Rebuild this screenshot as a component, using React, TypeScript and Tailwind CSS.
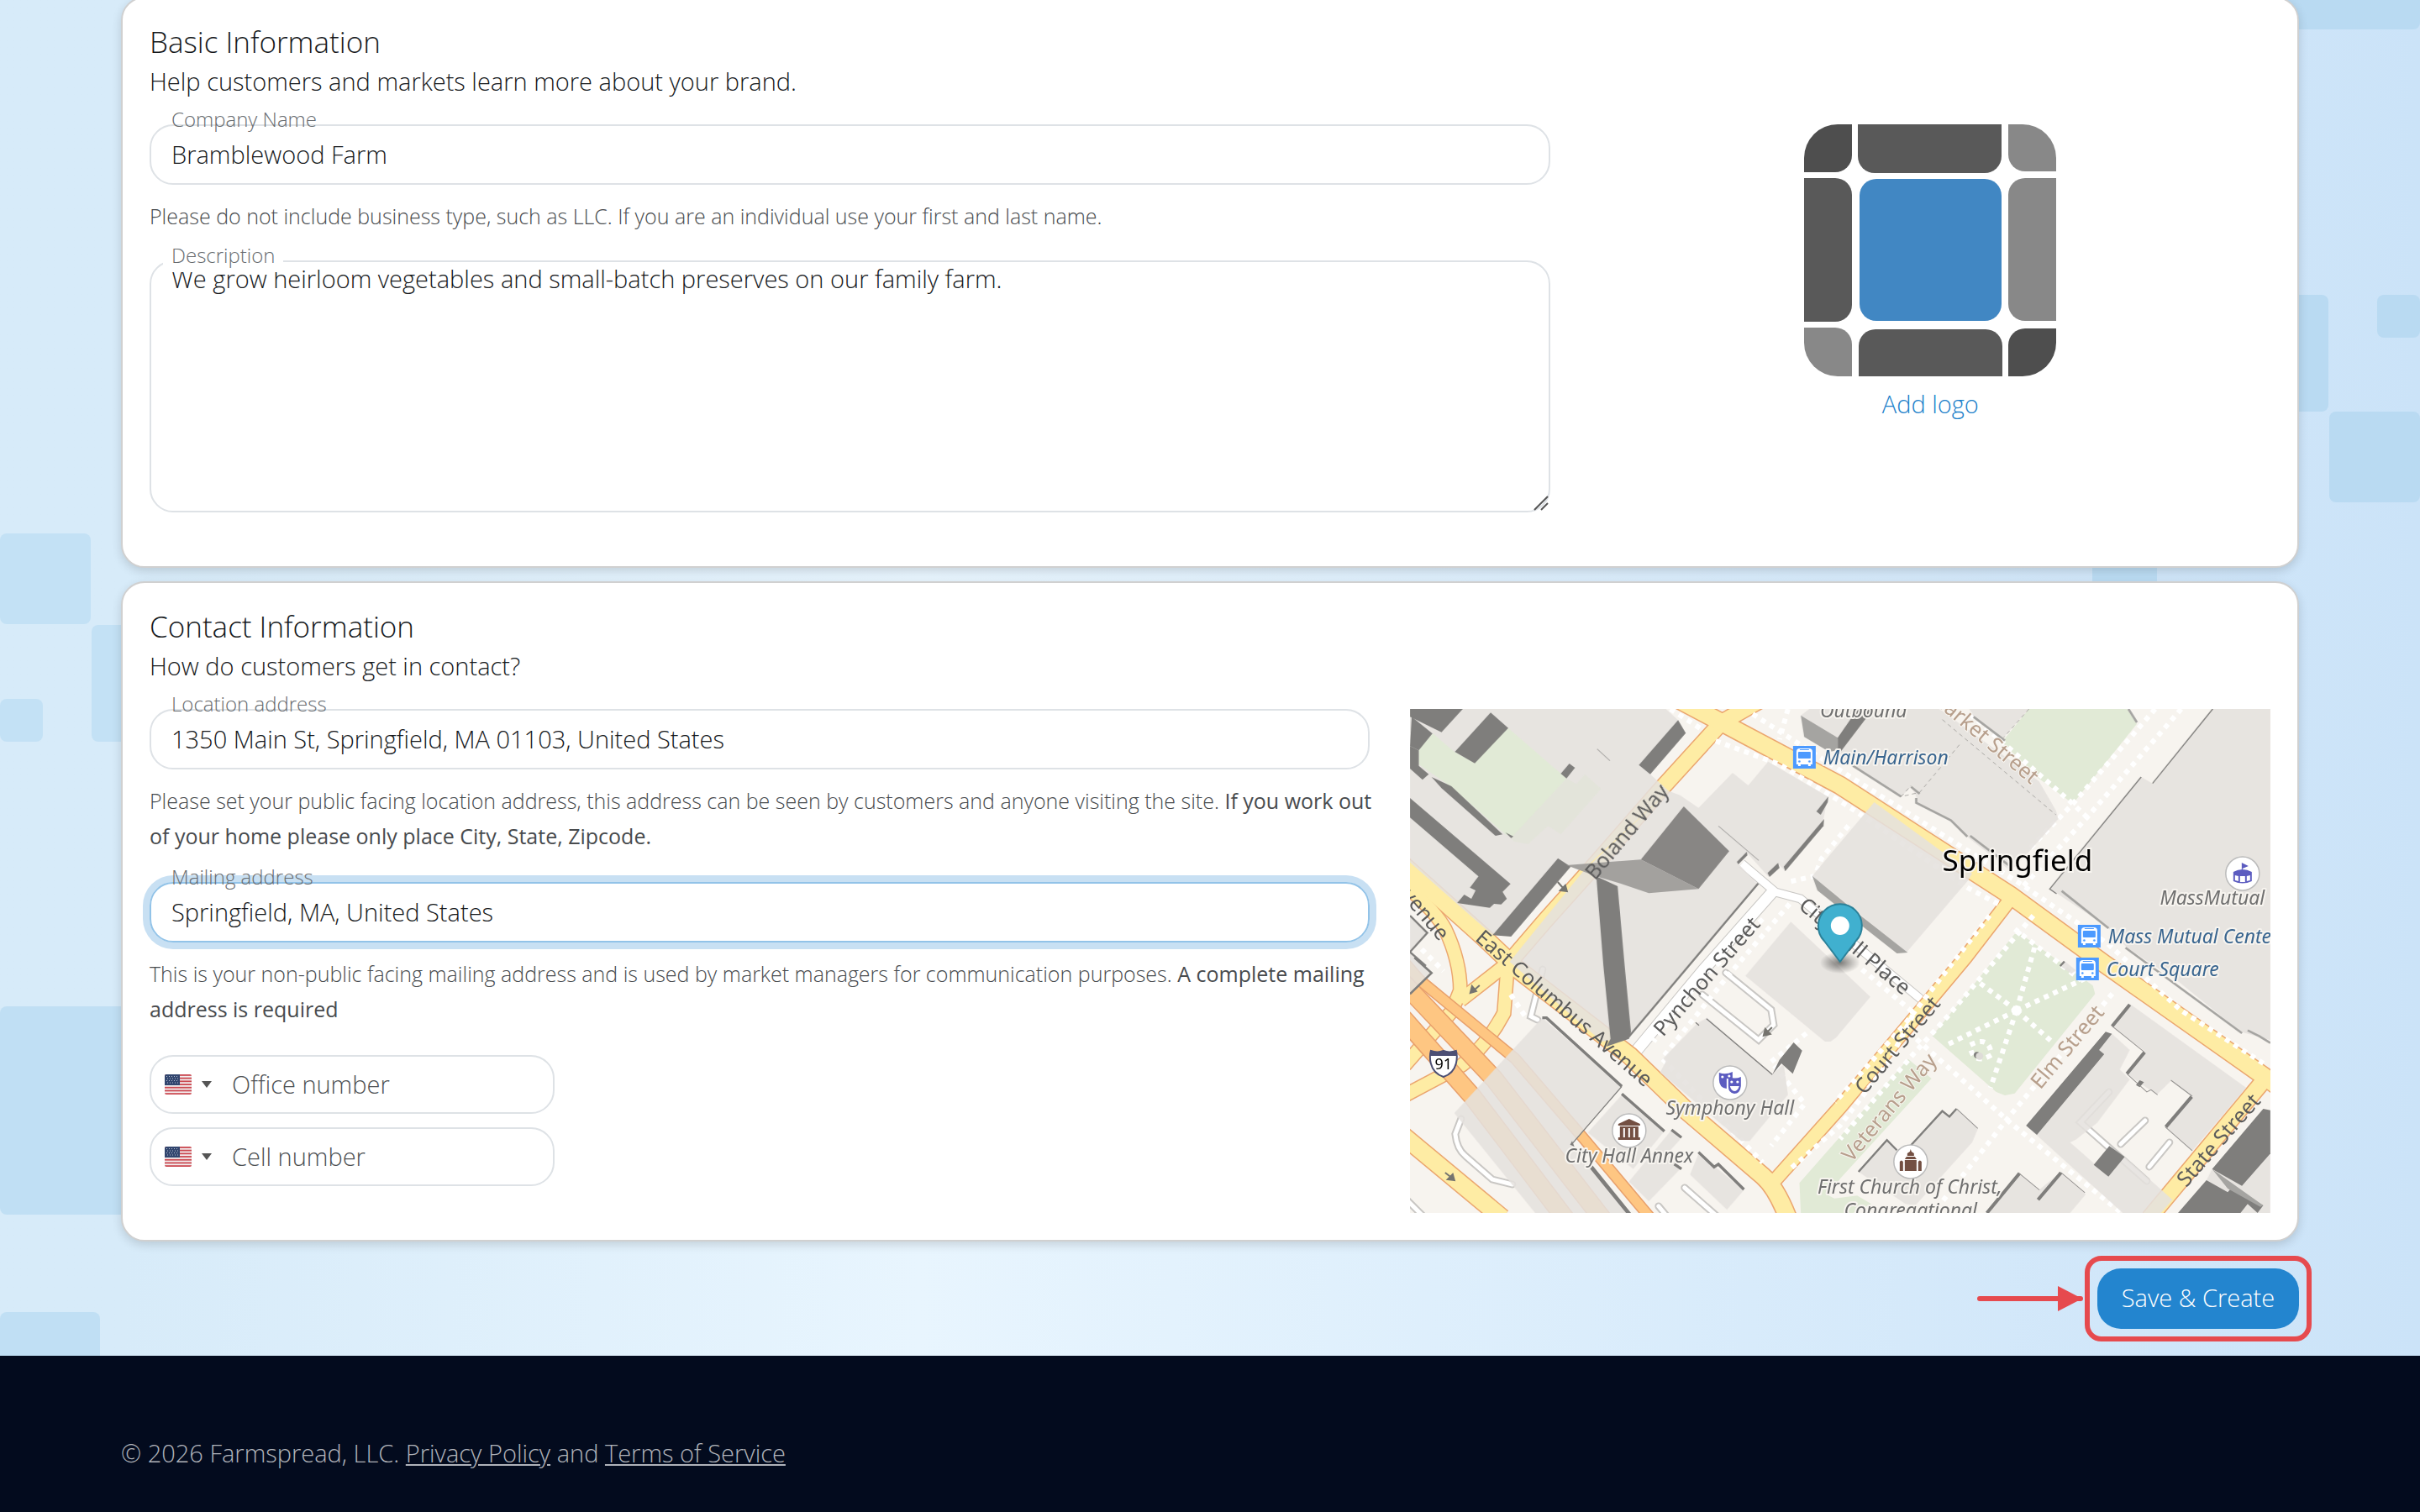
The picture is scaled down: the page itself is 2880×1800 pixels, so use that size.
import React from 'react';

const NUMBER_TYPES = [
  { id: 'office', label: 'Office number' },
  { id: 'cell', label: 'Cell number' },
];

const LABEL =
  'pointer-events-none absolute left-[26px] -top-[22px] text-[24px] leading-8 text-[#686c70]';
const FIELD =
  'block h-[72px] w-full rounded-[28px] border-2 bg-transparent px-6 pb-[2px] text-[29px] text-[#16191c] outline-none';

function Field({
  id,
  label,
  value,
  active,
}: {
  id: string;
  label: string;
  value: string;
  active?: boolean;
}) {
  return (
    <div className="relative">
      <input
        id={id}
        type="text"
        defaultValue={value}
        className={`${FIELD} ${
          active
            ? 'border-[#92c3e8] ring-8 ring-[#c8e0f3]'
            : 'border-[#dee2e6]'
        }`}
      />
      <label htmlFor={id} className={LABEL}>
        {label}
      </label>
    </div>
  );
}

function Hint({ children }: { children: React.ReactNode }) {
  return (
    <p className="mt-4 -mr-2 pb-[2px] text-[25px] leading-[42px] text-[#484b4e]">
      {children}
    </p>
  );
}

function Card({
  title,
  subtitle,
  children,
}: {
  title: string;
  subtitle: string;
  children: React.ReactNode;
}) {
  return (
    <section className="rounded-[28px] border-2 border-[#d0d0d0] bg-white p-8 shadow-[0_4px_12px_rgba(0,0,0,0.14)]">
      <h2 className="text-[35px] leading-10 text-[#16191c]">{title}</h2>
      <p className="mt-[6px] mb-[30px] text-[29px] leading-[42px] text-[#16191c]">
        {subtitle}
      </p>
      {children}
    </section>
  );
}

function Logo() {
  return (
    <svg viewBox="0 0 300 300" className="size-[300px]" aria-hidden="true">
      <path d="M0 57V40A40 40 0 0 1 40 0H57V37A20 20 0 0 1 37 57Z" fill="#4e4e4e" />
      <path d="M64 0H235V38A20 20 0 0 1 215 58H84A20 20 0 0 1 64 38Z" fill="#595959" />
      <path d="M243 0H260A40 40 0 0 1 300 40V56H263A20 20 0 0 1 243 36Z" fill="#888" />
      <path d="M0 64H37A20 20 0 0 1 57 84V215A20 20 0 0 1 37 235H0Z" fill="#595959" />
      <rect x="66" y="65" width="169" height="169" rx="20" fill="#4187c3" />
      <path d="M300 64H263A20 20 0 0 0 243 84V214A20 20 0 0 0 263 234H300Z" fill="#888" />
      <path d="M0 242H37A20 20 0 0 1 57 262V300H40A40 40 0 0 1 0 260Z" fill="#888" />
      <path d="M65 300V264A20 20 0 0 1 85 244H216A20 20 0 0 1 236 264V300Z" fill="#595959" />
      <path d="M300 243H263A20 20 0 0 0 243 263V300H260A40 40 0 0 0 300 260Z" fill="#4e4e4e" />
    </svg>
  );
}

function Flag() {
  return (
    <svg viewBox="0 0 32 24" className="h-6 w-8" aria-hidden="true">
      <clipPath id="flag">
        <rect width="32" height="24" rx="2" />
      </clipPath>
      <g clipPath="url(#flag)">
        <rect width="32" height="24" fill="#f3eff0" />
        {[0, 1, 2, 3, 4, 5, 6].map((i) => (
          <rect key={i} y={i * 3.7} width="32" height="1.85" fill="#cb4a52" />
        ))}
        <rect width="18" height="13" fill="#32466f" />
        <path
          d="M2 2.5H17M3 5H17M2 7.5H17M3 10H17"
          stroke="#b4bdd0"
          strokeDasharray="1 2"
        />
      </g>
    </svg>
  );
}

function PhoneField({ id, label }: { id: string; label: string }) {
  return (
    <div className="flex h-[70px] w-[482px] max-w-full items-center rounded-[28px] border-2 border-[#dee2e6] pl-4">
      <div className="relative flex h-full items-center gap-3 pr-6">
        <Flag />
        <svg viewBox="0 0 12 8" className="h-2 w-3" aria-hidden="true">
          <path d="M0 0H12L6 8Z" fill="#555" />
        </svg>
        <select
          aria-label={`${label} country`}
          className="absolute inset-0 opacity-0"
        >
          <option>+1</option>
        </select>
      </div>
      <input
        id={id}
        type="tel"
        aria-label={label}
        placeholder={label}
        className="h-full min-w-0 flex-1 bg-transparent pb-[2px] text-[29px] outline-none placeholder:text-[#4e5154]"
      />
    </div>
  );
}

const ROADS = {
  main: 'M318 -12L371 16L512 91L715 222L826 303L1019 439L1034 450',
  mainNorth: 'M371 16L420 -12',
  boland: 'M371 16L301 93L212 195L161 252L118 302',
  columbus: 'M-10 184L87 271L127 309L262 413L330 479L420 556Q436 570 450 606',
  court: 'M715 226L661 296L512 474L430 566',
  state: 'M1019 439L880 606',
  rampA: 'M-8 208Q30 240 42 262Q60 300 60 335L50 360L-6 424',
  rampB: 'M120 300L60 347',
  rampC: 'M116 310L112 362Q92 400 62 424L-6 460',
  west: 'M-8 508L110 606',
};

const I91 = [
  { d: 'M-8 300L12 323L125 416L204 508L288 608', w: 11 },
  { d: 'M-8 326L100 440L230 608', w: 20 },
  { d: 'M-8 368L75 462L186 608', w: 20 },
];

const WHITE_ROADS = [
  { d: 'M435 214L350 310L262 416', w: 13 },
  { d: 'M395 184L435 218L465 226L512 266L616 352', w: 9 },
];

const SERVICE = [
  'M376 314L430 358L433 376L415 394L348 340',
  'M832 456L798 492L877 562',
  'M875 490L846 518',
  'M904 516L880 545',
  'M61 488L54 506Q56 524 66 532L98 560L122 566',
  'M327 570L368 606M296 592L306 604',
  'M-4 584L16 604',
  'M158 310L144 366L152 370',
];

const FOOTPATHS = [
  'M408 6L512 73L728 209L830 279L918 359L1019 424',
  'M364 38L440 66L522 116L664 213L700 232',
  'M522 139L490 178L482 199L450 206',
  'M887 0L789 113L735 169',
  'M918 0L806 129L728 213',
  'M667 6L789 113L806 129',
  'M310 0L350 26M450 0L440 36',
  'M722 359L740 296L745 279',
  'M722 359L799 323L720 262',
  'M722 359L764 396',
  'M722 359L637 401',
  'M722 359L691 451',
  'M722 359L678 326',
  'M667 400Q690 388 692 412Q672 424 667 404',
  'M836 339L715 483L634 586',
  'M603 393L715 493L847 600',
  'M690 246L590 374L506 468',
  'M742 246L640 366L600 410L512 512',
  'M420 250L340 330L290 396',
  'M452 232L380 316L300 416L420 540',
  'M538 310L600 362L570 420L512 496L450 550',
  'M472 386L430 420L470 470L430 520',
  'M14 286L40 312M120 340L140 370',
];

const poly = (points: string[], fill: string) =>
  points.map((p) => <polygon key={p} points={p} fill={fill} />);
const lines = (points: string[], stroke: string, width: number) =>
  points.map((p) => (
    <polyline key={p} points={p} fill="none" stroke={stroke} strokeWidth={width} />
  ));

const NW = 'translate(-8 -4) scale(.338 .3333)';
const NE = 'translate(512 -4) scale(.338 .3333)';
const SW = 'translate(-8 296) scale(.338 .3333)';
const SE = 'translate(512 296) scale(.338 .3333)';

const STREETS = [
  { t: 'Boland Way', x: 258, y: 146, r: -50 },
  { t: 'East Columbus Avenue', x: 184, y: 356, r: 41 },
  { t: 'Avenue', x: 14, y: 238, r: 50 },
  { t: 'Pynchon Street', x: 353, y: 318, r: -49 },
  { t: 'City Hall Place', x: 530, y: 282, r: 40 },
  { t: 'Court Street', x: 580, y: 400, r: -50 },
  { t: 'State Street', x: 962, y: 513, r: -49 },
  { t: 'Veterans Way', x: 570, y: 474, r: -50, tan: true },
  { t: 'Elm Street', x: 782, y: 402, r: -50, tan: true },
  { t: 'Market Street', x: 684, y: 32, r: 40, tan: true },
];

const PLACES = [
  { t: 'Outbound', x: 540, y: 10 },
  { t: 'MassMutual', x: 955, y: 233 },
  { t: 'Symphony Hall', x: 381, y: 483 },
  { t: 'City Hall Annex', x: 261, y: 540 },
  { t: 'First Church of Christ,', x: 595, y: 577 },
  { t: 'Congregational', x: 596, y: 605 },
];

const STOPS = [
  { t: 'Main/Harrison', x: 456, y: 44 },
  { t: 'Mass Mutual Center', x: 795, y: 257 },
  { t: 'Court Square', x: 793, y: 296 },
];

function Bus({ x, y }: { x: number; y: number }) {
  return (
    <g transform={`translate(${x} ${y})`}>
      <rect width="27" height="27" fill="#4c9aff" />
      <path
        d="M4 22V7Q4 3 8 3H19Q23 3 23 7V22H21V24H18V22H9V24H6V22Z"
        fill="#fff"
      />
      <rect x="6" y="7" width="15" height="8" rx="1" fill="#4c9aff" />
      <rect x="8" y="4" width="11" height="1" fill="#4c9aff" />
      <circle cx="7.500" cy="18.500" r="1.300" fill="#4c9aff" />
      <circle cx="19.500" cy="18.500" r="1.300" fill="#4c9aff" />
    </g>
  );
}

function Poi({
  x,
  y,
  children,
}: {
  x: number;
  y: number;
  children: React.ReactNode;
}) {
  return (
    <g transform={`translate(${x} ${y})`}>
      <circle r="20" fill="#fff" stroke="#bbb" strokeWidth="1.5" />
      {children}
    </g>
  );
}

function LocationMap() {
  return (
    <svg
      viewBox="0 0 1024 600"
      preserveAspectRatio="xMidYMid slice"
      className="h-[600px] w-full bg-[#f7f4ef] font-['Noto_Sans',sans-serif] font-normal"
      role="img"
      aria-label="Map of downtown Springfield"
    >
      <defs>
        <radialGradient id="pinShadow">
          <stop offset="0" stopColor="#000" stopOpacity=".5" />
          <stop offset="1" stopColor="#000" stopOpacity="0" />
        </radialGradient>
      </defs>

      <g transform={NE}>
        {poly(['665,12 1010,12 1045,65 820,350 700,260 570,130'], '#e1ead6')}
      </g>
      <g transform={SE}>
        {poly(
          [
            '325,280 615,-85 640,-82 890,100 898,130 615,485 580,492 550,480',
            '240,362 322,432 0,790 -40,850 -20,860 60,850 110,880 40,915 -138,915 -143,805 0,640',
          ],
          '#e1ead6',
        )}
      </g>

      <g fill="none" stroke="#c9c7c4">
        {WHITE_ROADS.map(({ d, w }) => (
          <path key={d} d={d} strokeWidth={w + 2} />
        ))}
        {SERVICE.map((d) => (
          <path key={d} d={d} strokeWidth="9" strokeLinecap="round" />
        ))}
      </g>
      <g fill="none" stroke="#fff">
        {WHITE_ROADS.map(({ d, w }) => (
          <path key={d} d={d} strokeWidth={w} />
        ))}
        {SERVICE.map((d) => (
          <path key={d} d={d} strokeWidth="5" strokeLinecap="round" />
        ))}
      </g>

      <g fill="none" stroke="#eba66f" strokeWidth="18">
        <path d={ROADS.rampA} />
        <path d={ROADS.rampB} />
        <path d={ROADS.rampC} />
        <path d={ROADS.court} />
        <path d={ROADS.boland} strokeWidth="21" />
        <path d={ROADS.state} strokeWidth="21" />
        <path d={ROADS.west} strokeWidth="23" />
        <path d={ROADS.mainNorth} strokeWidth="21" />
        <path d={ROADS.columbus} strokeWidth="23" />
        <path d={ROADS.main} strokeWidth="23" />
      </g>
      <g fill="none" stroke="#feeca4" strokeWidth="15">
        <path d={ROADS.rampA} />
        <path d={ROADS.rampB} />
        <path d={ROADS.rampC} />
        <path d={ROADS.court} />
        <path d={ROADS.boland} strokeWidth="18" />
        <path d={ROADS.state} strokeWidth="18" />
        <path d={ROADS.west} strokeWidth="20" />
        <path d={ROADS.mainNorth} strokeWidth="18" />
        <path d={ROADS.columbus} strokeWidth="20" />
        <path d={ROADS.main} strokeWidth="20" />
      </g>
      {I91.map(({ d, w }) => (
        <g key={d} fill="none">
          <path d={d} stroke="#e8a06c" strokeWidth={w + 3} />
          <path d={d} stroke="#fec682" strokeWidth={w} />
        </g>
      ))}

      <g fill="none" stroke="#fff" strokeWidth="6" strokeDasharray="6 6">
        {FOOTPATHS.map((d) => (
          <path key={d} d={d} />
        ))}
      </g>

      {/* building footprints */}
      <g opacity=".87">
        <g transform={NW}>
          {poly(
            [
              '24,12 925,12 968,52 870,245 935,305 630,590 590,575 545,545 315,820 24,560',
              '935,305 975,320 1040,365 1160,240 1215,285 1285,200 1495,325 1480,405 1345,590 1320,565 1285,610 1210,525 1180,565 1250,640 1005,930 790,1185 700,1200 375,915 635,590',
              '1430,12 1600,12 1530,115 1400,35',
              '1365,772 1645,1040 1525,1185 1505,1200 1485,1200 1205,965',
              '24,750 85,812 24,880',
            ],
            '#e5e1de',
          )}
        </g>
        <g transform={NE}>
          {poly(
            [
              '-98,608 120,345 465,600 450,625 235,880 75,750',
              '120,12 350,12 700,270 760,375 768,405 640,550 600,590 450,470 395,415 268,345 268,325 250,290 215,325 45,215 0,180 0,105',
              '455,12 665,12 575,115 530,90 470,40',
              '1310,12 1515,12 1515,1195 1410,1165 1190,985 1010,865 940,790 740,655 1060,255 1100,278',
            ],
            '#e5e1de',
          )}
        </g>
        <g transform={SW}>
          {poly(
            [
              '180,555 490,215 770,460 595,665 810,925 475,925',
              '650,625 770,490 920,620 810,755',
              '945,615 975,650 930,700 980,750 865,870 795,800',
              '1040,700 1200,830 1140,900 1010,775',
              '905,410 925,370 915,360 1035,235 1070,215 1300,415 1340,380 1355,490 1220,655 1190,655',
              '24,-20 100,55 24,130',
            ],
            '#e5e1de',
          )}
        </g>
        <g transform={SE}>
          {poly(
            [
              '165,650 205,690 255,665 360,548 385,568 410,540 485,612 465,660 265,885 230,880 65,765',
              '1020,165 1430,465 1240,690 1145,605 1240,495 1165,440 1115,490 1045,440 1010,415 1075,335 955,245',
              '955,270 1020,330 985,400 1020,435 905,590 830,650 810,660 900,740 1000,710 1170,865 1130,912 995,912 655,600',
              '630,770 700,830 775,768 865,845 810,912 515,912',
              '1515,600 1515,912 1190,912 1290,795 1310,755',
              '775,30 790,12 830,45 815,58',
            ],
            '#e5e1de',
          )}
        </g>
      </g>

      {/* lawns and extruded walls */}
      <g transform={NW}>
        {poly(
          [
            '105,100 55,155 55,210 170,290 360,460 390,470 575,260 370,80 250,205 180,165',
          ],
          '#e1ead6',
        )}
        {poly(
          ['575,260 610,280 640,245 697,297 555,460 510,430 440,495 390,485 380,473'],
          '#e3e4da',
        )}
        {poly(
          [
            '24,12 210,12 135,95 24,40',
            '30,40 103,100 55,160 24,145',
            '308,25 370,80 252,206 182,165',
            '24,145 55,160 55,215 90,245 68,265 24,225',
            '100,255 170,288 350,460 325,465 135,295',
            '360,453 388,467 380,473',
            '585,207 605,222 575,260 555,243',
            '24,330 378,637 350,665 365,690 345,710 320,708 305,722 190,705 215,675 240,690 255,660 235,650 265,610 24,400',
            '545,545 590,575 380,825 315,820',
            '968,52 995,98 870,245 830,212',
            '1497,325 1495,345 1470,390 1455,378',
            '1482,405 1480,430 1345,592 1340,575',
            '1320,562 1325,580 1290,612 1283,598',
            '1210,522 1212,535 1180,567 1175,558',
            '1530,115 1600,12 1655,12 1540,165 1530,160',
          ],
          '#7f7e7c',
        )}
        {poly(['988,360 1148,520 1040,655 837,550'], '#888684')}
        {poly(['1400,35 1530,115 1530,160 1500,165 1412,112'], '#a5a4a1')}
        <polygon
          points="575,570 837,550 1040,655 865,670 755,632 680,610"
          fill="#9b9997"
          opacity=".9"
        />
        {poly(
          ['680,610 755,645 780,930 802,1165 795,1190 715,1218 730,1190 705,930'],
          '#7f7e7c',
        )}
        {lines(['1250,635 1005,930 790,1188', '24,750 85,812 24,880 80,930'], '#7f7e7c', 7)}
        {lines(['1110,430 1252,553', '683,155 728,197'], '#aaa8a6', 3)}
      </g>
      <g transform={NE}>
        {poly(['-98,608 0,690 75,752 238,882 200,885 75,785 0,725 -80,660'], '#a5a4a1')}
        {lines(['1312,12 1100,278', '1060,255 738,655 762,672'], '#7f7e7c', 4)}
        {lines(
          [
            '780,662 945,795',
            '1005,865 1415,1170',
            '1435,1160 1475,1180 1515,1205',
            '45,215 215,325',
            '250,290 280,315',
            '268,330 268,347 390,410 448,468',
            '458,465 600,575',
            '470,40 580,125',
            '1015,12 1045,60',
          ],
          '#a5a4a1',
          8,
        )}
        <path
          d="M360 50L760 390M665 12L575 115M420 140L280 310L215 325L250 285"
          stroke="#8a8886"
          strokeWidth="2"
          strokeDasharray="14 12"
          fill="none"
        />
      </g>
      <g transform={SW}>
        {poly(
          ['1375,303 1405,332 1372,415 1332,378 1300,418 1325,365', '595,655 603,675 588,668'],
          '#7f7e7c',
        )}
        {lines(
          [
            '490,215 505,215 770,460',
            '770,487 920,620',
            '945,615 980,643',
            '955,738 980,755',
            '1040,695 1095,748 1110,738 1200,828',
          ],
          '#7f7e7c',
          10,
        )}
        {lines(['660,745 800,920'], '#7f7e7c', 14)}
        {lines(['770,460 595,665', '1068,218 1300,418', '1030,232 1042,242'], '#7f7e7c', 4)}
        {lines(['40,0 100,55 24,130'], '#7f7e7c', 8)}
      </g>
      <g transform={SE}>
        {poly(
          [
            '935,265 957,272 912,330 930,345 693,633 655,600',
            '948,673 1002,712 945,782 893,740',
            '1490,540 1515,545 1515,700 1415,815 1310,755',
            '1290,795 1365,838 1380,820 1490,885 1470,912 1435,880 1410,912 1190,912',
            '1055,438 1070,445 1055,463 1042,455',
          ],
          '#7f7e7c',
        )}
        {poly(['1310,755 1490,885 1480,890 1365,825'], '#a5a4a1')}
        {lines(
          [
            '1020,168 958,245',
            '1072,338 1010,415',
            '1238,497 1147,605',
            '517,912 632,770',
            '697,865 778,768',
          ],
          '#7f7e7c',
          12,
        )}
        {lines(
          [
            '65,765 165,652 200,688',
            '250,670 360,548 385,568 410,540',
            '790,14 775,30',
          ],
          '#7f7e7c',
          7,
        )}
        {lines(
          [
            '958,245 1072,338',
            '1010,415 1080,480 1095,472 1118,490',
            '1165,438 1240,495',
            '1145,605 1240,690',
            '410,540 485,610',
            '630,770 702,830',
            '778,768 862,840',
          ],
          '#969492',
          3,
        )}
        <circle cx="482" cy="348" r="11" fill="#7f7e7c" />
        <circle cx="491" cy="352" r="13" fill="#dedcd8" />
      </g>

      {/* one-way arrows */}
      <g stroke="#75746f" strokeWidth="2" fill="#75746f">
        <path d="M83 329L74 337M72 338L74 330L79 336Z" />
        <path d="M42 552L51 559M53 561L45 560L51 554Z" />
        <path d="M176 206L184 215M187 217L179 216L185 210Z" />
        <path d="M431 379L424 386M421 389L423 381L429 387Z" />
      </g>

      <g fontSize="25" textAnchor="middle" stroke="#f7f4ef" strokeWidth="2" paintOrder="stroke">
        {STREETS.map(({ t, x, y, r, tan }) => (
          <text
            key={t}
            transform={`translate(${x} ${y}) rotate(${r})`}
            dy="9"
            fill={tan ? '#b79f8c' : '#5b5b5b'}
            strokeOpacity={tan ? 1 : 0}
          >
            {t}
          </text>
        ))}
      </g>

      {STOPS.map(({ t, x, y }) => (
        <Bus key={t} x={x} y={y} />
      ))}
      <g fontSize="23" fontStyle="italic" stroke="#f7f4ef" strokeWidth="4" paintOrder="stroke" strokeLinejoin="round">
        {STOPS.map(({ t, x, y }) => (
          <text key={t} x={x + 36} y={y + 22} fill="#39658f">
            {t}
          </text>
        ))}
        {PLACES.map(({ t, x, y }) => (
          <text key={t} x={x} y={y} fill="#6f6f6f" textAnchor="middle">
            {t}
          </text>
        ))}
      </g>
      <text
        x="723"
        y="193"
        fontSize="35"
        textAnchor="middle"
        stroke="#f7f4ef"
        strokeWidth="4"
        paintOrder="stroke"
      >
        Springfield
      </text>

      <Poi x={991} y={196}>
        <g fill="#5c5cc0">
          <path d="M-1 -13L7 -9L0 -6V-4H-1Z" />
          <path d="M-11 -2Q0 -8 11 -2V9Q0 14 -11 9Z" />
          <path d="M-9 2L-5 3V9L-9 8ZM-3 3H3V10H-3ZM5 3L9 2V8L5 9Z" fill="#fff" />
        </g>
      </Poi>
      <Poi x={381} y={445}>
        <path d="M-13 -12Q-5 -9 3 -13V-5H-4V7Q-13 6 -13 -4Z" fill="#5c5cc0" />
        <path d="M-2 -7Q6 -4 13 -7V4Q12 13 5 13Q-2 12 -2 4Z" fill="#5c5cc0" />
        <g fill="#fff">
          <circle cx="-9" cy="-7" r="1.600" />
          <circle cx="-1" cy="-8" r="1.600" />
          <circle cx="2" cy="-1" r="1.600" />
          <circle cx="9" cy="-1" r="1.600" />
          <path d="M0 4H11Q9 10 5 10Q1 9 0 4Z" />
        </g>
      </Poi>
      <Poi x={261} y={502}>
        <g fill="#734f42">
          <path d="M0 -14L13 -8V-6H-13V-8Z" />
          <path d="M-11 -5H11V8H13V11H-13V8H-11Z" />
          <path d="M-7 -3H-5V8H-7ZM-1 -3H1V8H-1ZM5 -3H7V8H5Z" fill="#fff" />
        </g>
      </Poi>
      <Poi x={596} y={539}>
        <g fill="#734f42">
          <path d="M0 -15L1 -12L4 -10V-7H-4V-10L-1 -12Z" />
          <path d="M-5 -6H5L7 -3H-7Z" />
          <path d="M-7 -2H7V11H-7ZM-13 0Q-11 -3 -9 0V11H-13ZM9 0Q11 -3 13 0V11H9Z" />
        </g>
      </Poi>

      <g transform="translate(40 422)">
        <path
          d="M-15 -15Q-7 -12 0 -15Q7 -12 15 -15Q17 -8 15 0Q12 12 0 16Q-12 12 -15 0Q-17 -8 -15 -15Z"
          fill="#fff"
          stroke="#4c4f74"
          strokeWidth="2"
        />
        <path d="M-15 -15Q-7 -12 0 -15Q7 -12 15 -15L16 -9H-16Z" fill="#4c4f74" />
        <text y="7" fontSize="18" textAnchor="middle">
          91
        </text>
      </g>

      <ellipse cx="512" cy="302" rx="24" ry="13" fill="url(#pinShadow)" />
      <path
        d="M512 301L493 276A26 26 0 1 1 531 276Z"
        fill="#40b0cf"
        stroke="#2b8199"
        strokeWidth="2"
        strokeLinejoin="round"
      />
      <circle cx="512" cy="258" r="11" fill="#fff" />
    </svg>
  );
}

function Backdrop() {
  return (
    <div className="absolute inset-0 -z-10 bg-linear-to-r from-[#d7ebf9] from-5% via-[#e8f5fe] via-38% to-[#cbe3f8]">
      <div className="absolute top-[635px] left-0 h-[108px] w-[108px] rounded-lg bg-[#c3e1f5]" />
      <div className="absolute top-[744px] left-[109px] h-[139px] w-[138px] rounded-lg bg-[#c3e1f5]" />
      <div className="absolute top-[832px] left-0 h-[51px] w-[51px] rounded-lg bg-[#c3e1f5]" />
      <div className="absolute top-[1198px] left-0 h-[248px] w-[248px] rounded-lg bg-[#c0dff4]" />
      <div className="absolute top-[1562px] left-0 h-[80px] w-[119px] rounded-lg bg-[#c0dff4]" />
      <div className="absolute -top-[100px] right-0 h-[135px] w-[240px] rounded-lg bg-[#b9daf2]" />
      <div className="absolute top-[351px] right-[109px] h-[139px] w-[138px] rounded-lg bg-[#b9daf2]" />
      <div className="absolute top-[351px] right-0 h-[51px] w-[51px] rounded-lg bg-[#b9daf2]" />
      <div className="absolute top-[490px] right-0 h-[108px] w-[108px] rounded-lg bg-[#b9daf2]" />
      <div className="absolute top-[650px] right-[313px] h-[100px] w-[77px] bg-[#bbdcf3]" />
    </div>
  );
}

export default function App() {
  return (
    <div className="flex min-h-screen flex-col font-['Open_Sans',sans-serif] font-light">
      <main className="relative isolate overflow-hidden px-36 pb-8">
        <Backdrop />
        <form className="-mt-1 flex flex-col gap-4">
          <Card
            title="Basic Information"
            subtitle="Help customers and markets learn more about your brand."
          >
            <div className="grid grid-cols-3 gap-12">
              <div className="col-span-2">
                <Field id="company" label="Company Name" value="Bramblewood Farm" />
                <Hint>
                  Please do not include business type, such as LLC. If you are
                  an individual use your first and last name.
                </Hint>
                <div className="relative mt-[30px] mb-8">
                  <textarea
                    id="description"
                    defaultValue="We grow heirloom vegetables and small-batch preserves on our family farm."
                    className="block h-[300px] w-full rounded-[28px] border-2 border-[#dee2e6] px-6 text-[29px] leading-10 text-[#16191c] outline-none [&::-webkit-resizer]:bg-transparent"
                  />
                  <svg
                    viewBox="0 0 18 18"
                    className="pointer-events-none absolute right-[2px] bottom-[2px] size-[18px]"
                    aria-hidden="true"
                  >
                    <path d="M1 17L17 1M9 17L17 9" stroke="#555" strokeWidth="2" />
                  </svg>
                  <label
                    htmlFor="description"
                    className="pointer-events-none absolute -top-[22px] left-4 bg-white px-[10px] pb-1 text-[24px] leading-8 text-[#686c70]"
                  >
                    Description
                  </label>
                </div>
              </div>
              <div className="flex flex-col items-center gap-3">
                <Logo />
                <button
                  type="button"
                  className="text-[29px] leading-[42px] text-[#1b7fca]"
                >
                  Add logo
                </button>
              </div>
            </div>
          </Card>

          <Card title="Contact Information" subtitle="How do customers get in contact?">
            <div className="grid grid-cols-12 gap-12">
              <div className="col-span-7">
                <Field
                  id="location"
                  label="Location address"
                  value="1350 Main St, Springfield, MA 01103, United States"
                />
                <Hint>
                  Please set your public facing location address, this address
                  can be seen by customers and anyone visiting the site.{' '}
                  <b className="font-medium">
                    If you work out of your home please only place City, State,
                    Zipcode.
                  </b>
                </Hint>
                <div className="mt-8">
                  <Field
                    id="mailing"
                    label="Mailing address"
                    value="Springfield, MA, United States"
                    active
                  />
                </div>
                <Hint>
                  This is your non-public facing mailing address and is used by
                  market managers for communication purposes.{' '}
                  <b className="font-medium">
                    A complete mailing address is required
                  </b>
                </Hint>
                <div className="mt-8 flex flex-col gap-4">
                  {NUMBER_TYPES.map((x) => (
                    <PhoneField key={x.id} {...x} />
                  ))}
                </div>
              </div>
              <div className="col-span-5">
                <LocationMap />
              </div>
            </div>
          </Card>

          <div className="relative mt-4 flex justify-end">
            <button
              type="submit"
              className="h-[72px] w-[240px] rounded-[28px] bg-[#2385cf] pb-[2px] text-[29px] text-white"
            >
              Save &amp; Create
            </button>
            <div className="pointer-events-none absolute -inset-y-[15px] -right-[15px] w-[270px] rounded-[20px] border-[6px] border-[#e64a4e]" />
            <svg
              viewBox="0 0 126 30"
              className="pointer-events-none absolute top-[21px] right-[257px] h-[30px] w-[126px]"
              aria-hidden="true"
            >
              <path d="M3 15H123" stroke="#e64a4e" strokeWidth="6" strokeLinecap="round" />
              <path d="M96 0L125 15L96 30Z" fill="#e64a4e" />
            </svg>
          </div>
        </form>
      </main>
      <footer className="grow bg-[#030b1e] px-36 pt-[95px] pb-[49px] text-[29px] leading-[42px] text-[#b0b3ba]">
        © 2026 Farmspread, LLC.{' '}
        <a href="#privacy" className="underline">
          Privacy Policy
        </a>{' '}
        and{' '}
        <a href="#terms" className="underline">
          Terms of Service
        </a>
      </footer>
    </div>
  );
}
